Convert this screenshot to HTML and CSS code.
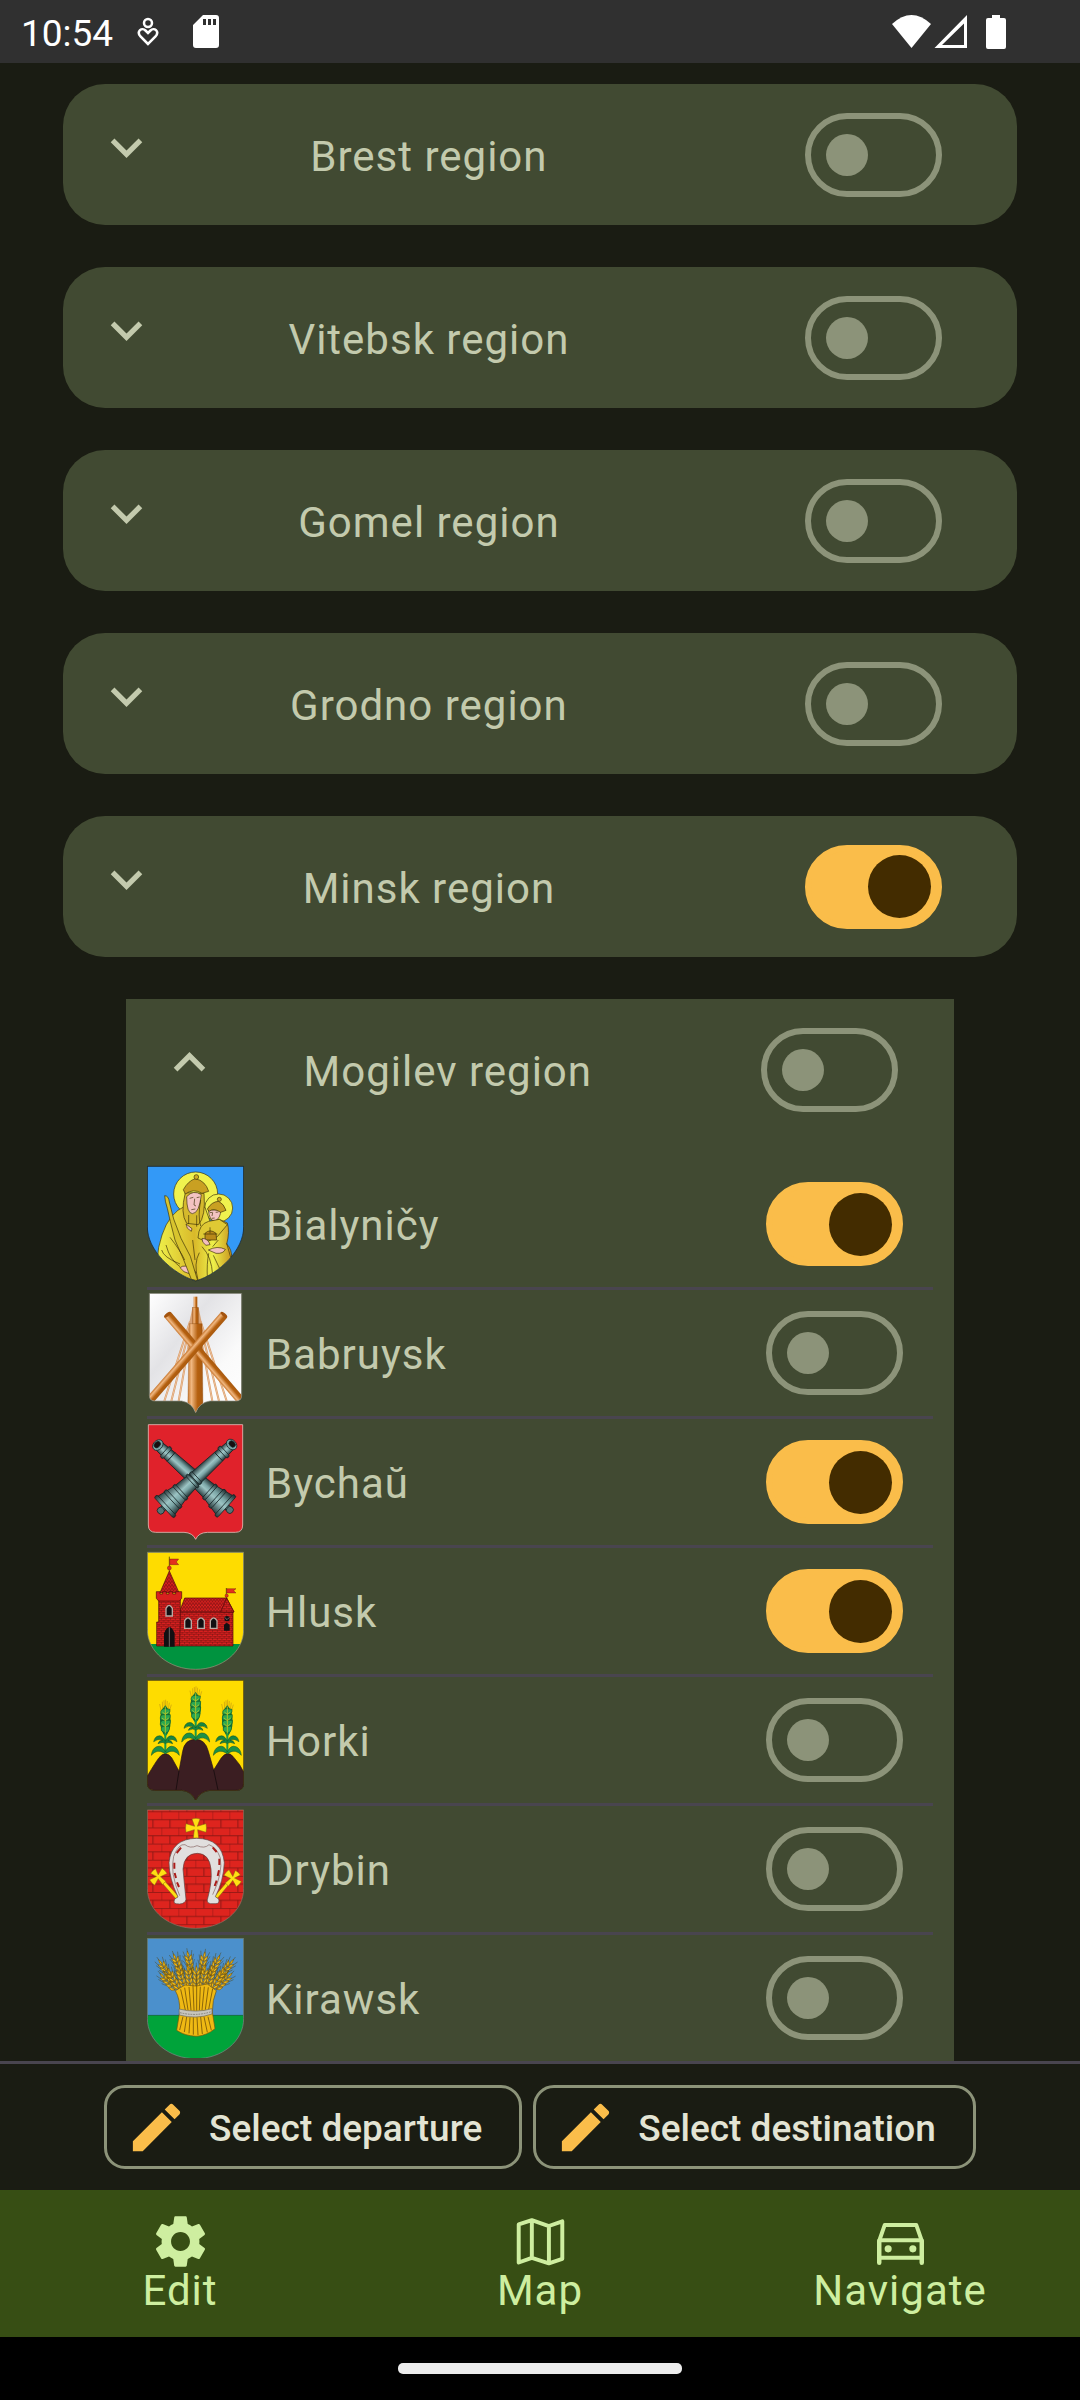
FILE: index.html
```html
<!DOCTYPE html>
<html lang="en">
<head>
<meta charset="utf-8">
<meta name="viewport" content="width=device-width, initial-scale=1">
<title>Regions</title>
<link rel="stylesheet" href="styles.css">
</head>
<body>
<svg class="defs" width="0" height="0" aria-hidden="true">
  <defs>
    <symbol id="chevron-down" viewBox="0 0 24 24"><path d="M16.59 8.59 12 13.17 7.41 8.59 6 10l6 6 6-6z"/></symbol>
    <symbol id="chevron-up" viewBox="0 0 24 24"><path d="m12 8-6 6 1.41 1.41L12 10.83l4.59 4.58L18 14z"/></symbol>
    <symbol id="pencil" viewBox="0 0 24 24"><path d="M3 17.25V21h3.75L17.81 9.94l-3.75-3.75L3 17.25zM20.71 7.04c.39-.39.39-1.02 0-1.41l-2.34-2.34c-.39-.39-1.02-.39-1.41 0l-1.83 1.83 3.75 3.75 1.83-1.83z"/></symbol>
    <linearGradient id="gold" x1="0" x2="1"><stop offset="0" stop-color="#eef04a"/><stop offset=".5" stop-color="#d9b92a"/><stop offset=".75" stop-color="#eef04a"/><stop offset="1" stop-color="#c9961f"/></linearGradient>
    <linearGradient id="silver" x1="0" y1="0" x2="1" y2="1"><stop offset="0" stop-color="#fff"/><stop offset=".35" stop-color="#e3e3e6"/><stop offset=".7" stop-color="#fafafa"/><stop offset="1" stop-color="#fff"/></linearGradient>
    <linearGradient id="wood" x1="0" x2="1"><stop offset="0" stop-color="#c87830"/><stop offset=".25" stop-color="#f0b780"/><stop offset=".65" stop-color="#b5600f"/><stop offset="1" stop-color="#a85a10"/></linearGradient>
    <linearGradient id="steel" x1="0" x2="1"><stop offset="0" stop-color="#26383a"/><stop offset=".45" stop-color="#9cc4c4"/><stop offset=".65" stop-color="#7ba5a6"/><stop offset="1" stop-color="#1c2a2c"/></linearGradient>
    <pattern id="small-brick" width="14" height="12" patternUnits="userSpaceOnUse"><rect width="14" height="12" fill="#d8201f"/><path d="M0 .7h14M0 6.7h14M3 0v6M10 6v6" stroke="#5b0c0c" stroke-width="1.4"/></pattern>
    <pattern id="tile" width="9" height="11" patternUnits="userSpaceOnUse"><rect width="9" height="11" fill="#d8201f"/><path d="M0 0 4.500 10 9 0" fill="none" stroke="#5b0c0c" stroke-width="1.600"/></pattern>
    <pattern id="big-brick" x="43" y="34" width="51" height="48.400" patternUnits="userSpaceOnUse"><rect width="51" height="49" fill="#de241e"/><path d="M0 1h51M0 25h51M0 0v25M26 25v24" stroke="#7c1512" stroke-width="2.400"/></pattern>
    <clipPath id="clip-bialynicy"><path d="M52 49H341V230C341 300 270 370 197 393C125 370 52 300 52 230Z"/></clipPath>
    <clipPath id="clip-round-a"><path d="M52 37H341V268C341 336 276 388 197 388S52 336 52 268Z"/></clipPath>
    <clipPath id="clip-round-b"><path d="M52 30H341V265C341 334 276 385 197 385S52 334 52 265Z"/></clipPath>
    <clipPath id="clip-round-c"><path d="M52 415H341V655C341 724 276 776 197 776S52 724 52 655Z"/></clipPath>
    <clipPath id="clip-babruysk"><path d="M58 40H335V346Q335 363 318 363H240Q208 368 197 398Q186 368 155 363H75Q58 363 58 346Z"/></clipPath>
    <g id="corn">
      <path d="M-13-27-17-46M-8-30-9-53M-3-30-4-57M0-30 1-59M4-30 6-55M9-30 12-50M13-27 18-44" stroke="#c79a12" stroke-width="2" fill="none"/>
      <path d="M0-42Q-17-25-16 5T0 52Q16 35 16 5T0-42Z" fill="#12763a"/>
      <g fill="#2ba84f" stroke="#0c4a25" stroke-width="1.500"><path d="M0-32Q-16-32-14-17L0-12Q16-15 14-30Z"/><path d="M0-14Q-17-16-15 0L0 6Q16 3 15-14Z"/><path d="M0 3Q-17 1-15 17L0 23Q16 20 15 3Z"/><path d="M0 21Q-15 19-12 34L0 42Q13 38 13 21Z"/></g>
      <path d="M0-38V47M-9-22 0-15 9-22M-10-4 0 4 10-4M-10 13 0 22 10 13" stroke="#e0cf1a" stroke-width="2" fill="none"/>
      <path d="M0 42V102" stroke="#1a9a46" stroke-width="6"/>
      <path d="M0 66Q-9 44-25 51Q-34 56-35 67Q-22 56-8 63Q-20 64-22 73Q-8 66 0 72Q8 66 22 73Q20 64 8 63Q22 56 35 67Q34 56 25 51Q9 44 0 66Z" fill="#168541" stroke="#0c4a25" stroke-width="1.500"/>
      <path d="M0 98Q-9 76-26 82Q-40 88-42 108Q-25 88-5 100Q0 106 5 100Q25 88 42 108Q40 88 26 82Q9 76 0 98Z" fill="#1c9147" stroke="#0c4a25" stroke-width="1.500"/>
    </g>
    <g id="ear">
      <path d="M-10 0-16-18M-9-13-13-30M0-20V-38M9-13 14-30M10 0 17-18M-9 15-17-2M9 15 17-2" stroke="#4b4418" stroke-width="1.300"/>
      <g fill="#edb91b" stroke="#6d4c06" stroke-width="1.500"><path d="M0-9Q-6-18 0-29Q6-18 0-9Z"/><path d="M0 0Q-12-4-10-17Q0-12 0 0Q0-12 10-17Q12-4 0 0Z"/><path d="M0 13Q-12 9-10-5Q0 0 0 13Q0 0 10-5Q12 9 0 13Z"/><path d="M0 26Q-12 22-10 8Q0 13 0 26Q0 13 10 8Q12 22 0 26Z"/><path d="M0 39Q-12 35-10 21Q0 26 0 39Q0 26 10 21Q12 35 0 39Z"/></g>
    </g>
    <path id="cross" d="M-4-5-12-27Q0-31 12-27L4-5 30-13Q33 0 30 13L5 5 8 30H-8L-5 5-30 13Q-33 0-30-13Z"/>
    <g id="cannon">
      <rect x="-7" y="124" width="14" height="10"/><circle cx="0" cy="140" r="9" fill="#557577"/>
      <path d="M-12-114H12L15-68-15-68Z"/><path d="M-15-68H15L18 20H-18Z"/><path d="M-18 20H18L22 70H-22Z"/><path d="M-22 70H22L33 126H-33Z"/>
      <rect x="-18" y="-91" width="36" height="10" rx="4"/><rect x="-20" y="10" width="40" height="9" rx="4"/><rect x="-22" y="22" width="44" height="8" rx="4"/><rect x="-25" y="65" width="50" height="9" rx="4"/><rect x="-30" y="91" width="60" height="10" rx="4"/><rect x="-36" y="119" width="72" height="10" rx="4"/>
      <ellipse cx="0" cy="-115" rx="15" ry="12" fill="#79a3a4"/><ellipse cx="0" cy="-117" rx="9" ry="7" fill="#160f10"/>
    </g>
  </defs>
</svg>

<div class="screen">
  <header class="status-bar">
    <time class="clock">10:54</time>
    <svg class="status-heart" width="22" height="30" viewBox="0 0 22 30" aria-hidden="true"><g fill="none" stroke="#fff" stroke-width="2.500"><circle cx="11" cy="6" r="4"/><path d="M11 27 3.500 19.500C-1 14 5 10 8.500 13.500L11 16 13.500 13.500C17 10 23 14 18.500 19.500Z"/></g></svg>
    <svg class="status-card" width="26" height="33" viewBox="0 0 26 33" aria-hidden="true"><path fill="#fff" fill-rule="evenodd" d="M10 0H23Q26 0 26 3V30Q26 33 23 33H3Q0 33 0 30V10ZM10 4V10H13V4ZM15 4V10H18V4ZM20 4V10H23V4Z"/></svg>
    <svg class="status-signals" width="115" height="34" viewBox="0 0 115 34" aria-hidden="true"><g fill="#fff"><path d="M0 9Q19.500-9 39 9L19.500 33Z"/><path fill-rule="evenodd" d="M75 0V33H42.500ZM72 8.500 50 30H72Z"/><path d="M100 0H108V3H112Q114 3 114 5V32Q114 34 112 34H96Q94 34 94 32V5Q94 3 96 3H100Z"/></g></svg>
  </header>

  <main class="regions">
    <section class="region">
      <button class="expand" type="button" aria-label="Expand Brest region"><svg class="icon"><use href="#chevron-down"/></svg></button>
      <label class="region-name" for="brest">Brest region</label>
      <input class="switch" type="checkbox" id="brest">
    </section>
    <section class="region">
      <button class="expand" type="button" aria-label="Expand Vitebsk region"><svg class="icon"><use href="#chevron-down"/></svg></button>
      <label class="region-name" for="vitebsk">Vitebsk region</label>
      <input class="switch" type="checkbox" id="vitebsk">
    </section>
    <section class="region">
      <button class="expand" type="button" aria-label="Expand Gomel region"><svg class="icon"><use href="#chevron-down"/></svg></button>
      <label class="region-name" for="gomel">Gomel region</label>
      <input class="switch" type="checkbox" id="gomel">
    </section>
    <section class="region">
      <button class="expand" type="button" aria-label="Expand Grodno region"><svg class="icon"><use href="#chevron-down"/></svg></button>
      <label class="region-name" for="grodno">Grodno region</label>
      <input class="switch" type="checkbox" id="grodno">
    </section>
    <section class="region">
      <button class="expand" type="button" aria-label="Expand Minsk region"><svg class="icon"><use href="#chevron-down"/></svg></button>
      <label class="region-name" for="minsk">Minsk region</label>
      <input class="switch" type="checkbox" id="minsk" checked>
    </section>

    <section class="open-region">
      <div class="region region-head">
        <button class="expand" type="button" aria-label="Collapse Mogilev region"><svg class="icon"><use href="#chevron-up"/></svg></button>
        <label class="region-name" for="mogilev">Mogilev region</label>
        <input class="switch" type="checkbox" id="mogilev">
      </div>
      <ul class="districts">
        <li class="district">
          <svg class="arms" viewBox="51 42 291 360" aria-hidden="true">
            <g clip-path="url(#clip-bialynicy)" stroke="#3d3108" stroke-width="2">
              <path d="M52 49H341V393H52Z" fill="#3399f7" stroke="none"/>
              <circle cx="197" cy="132" r="66" fill="#f0f24e"/><circle cx="266" cy="174" r="42" fill="#f0f24e"/>
              <path d="M166 168Q118 188 96 255Q83 292 82 330L140 380 197 394 250 378 305 330Q307 298 290 282Q300 245 292 219L268 208 240 214 225 172Z" fill="url(#gold)"/>
              <path d="M166 128Q150 190 170 220L205 224Q228 200 222 130Z" fill="#d5b92c"/>
              <path d="M170 140Q170 190 187 191Q208 190 214 134Q190 118 170 140Z" fill="#f3c3c2"/>
              <path d="M160 119Q175 92 196 86Q226 92 236 124L216 130Q190 114 166 132Z" fill="#c9a022"/><circle cx="199" cy="81" r="7" fill="#d0ad24"/>
              <path d="M179 145 190 142M200 143 209 141M194 146 192 165 198 168M184 179 196 177" fill="none"/>
              <path d="M235 180Q238 213 255 213Q272 205 272 180Z" fill="#f3c3c2"/>
              <path d="M232 177Q245 155 266 154Q282 162 288 181L272 187Q250 172 238 184Z" fill="#c9a022"/><circle cx="268" cy="148" r="6" fill="#d0ad24"/>
              <path d="M239 188 248 187M257 187 265 186M248 188 246 198M245 205 254 204" fill="none"/>
              <path d="M236 214Q206 222 204 264L230 276 262 260 292 224 268 208Z" fill="#dfc934"/>
              <path d="M258 250Q240 235 225 250V270H260Z" fill="#b98919"/><path d="M240 232V250M220 252H262" fill="none"/>
              <path d="M216 265Q235 266 240 284L228 286Q215 278 216 265ZM235 300Q262 286 286 298Q280 312 258 310ZM150 353Q164 341 190 358L198 368 178 371Q160 368 150 353ZM168 222 186 236 184 244Q168 236 168 222Z" fill="#f3bfbf"/>
              <path d="M104 137Q116 137 118 156L131 207 153 265 181 319 203 392 184 388 160 327 135 270 121 215 112 175Q105 155 104 137Z" fill="#d8c42e"/>
              <path d="M108 285Q120 330 150 350M120 262Q150 300 164 330M95 300Q100 322 150 342M208 308Q190 340 204 390M216 290Q245 320 248 376M236 310Q230 340 232 384M250 316 272 362M188 270 195 330M176 195V222M200 196V230M212 150Q203 200 212 228M290 280 302 322M265 270 248 290" fill="none"/>
            </g>
            <path d="M52 49H341V230C341 300 270 370 197 393C125 370 52 300 52 230Z" fill="none" stroke="#14202c" stroke-width="2"/>
          </svg>
          <label class="district-name" for="bialynicy">Bialyničy</label>
          <input class="switch" type="checkbox" id="bialynicy" checked>
        </li>
        <li class="district">
          <svg class="arms" viewBox="51 39 291 360" aria-hidden="true">
            <g clip-path="url(#clip-babruysk)">
              <path d="M58 40H335V399H58Z" fill="url(#silver)"/>
              <path d="M180 125 103 363M183 130 124 363M186 140 146 363M212 125 290 363M209 130 267 363M206 140 247 363" stroke="#d99862" stroke-width="6"/><path d="M180 125 103 363M183 130 124 363M186 140 146 363M212 125 290 363M209 130 267 363M206 140 247 363" stroke="#f5d5b8" stroke-width="2"/>
              <path d="M187 84 177 132H216L206 84Z" fill="#d9a274"/>
              <rect x="191" y="50" width="11" height="34" fill="url(#wood)"/><rect x="188" y="82" width="17" height="50" fill="url(#wood)" stroke="#8d4a0c"/><path d="M178 131H216L219 399H173Z" fill="url(#wood)" stroke="#8d4a0c"/>
              <g transform="translate(112 104) rotate(-40.500)"><rect x="-12" width="25" height="345" fill="url(#wood)"/><ellipse cx="0" cy="0" rx="12" ry="5" fill="#a4540f"/></g>
              <g transform="translate(282 104) rotate(41)"><rect x="-12" width="25" height="345" fill="url(#wood)"/><ellipse cx="0" cy="0" rx="12" ry="5" fill="#a4540f"/></g>
            </g>
            <path d="M58 40H335V346Q335 363 318 363H240Q208 368 197 398Q186 368 155 363H75Q58 363 58 346Z" fill="none" stroke="#8d8d80" stroke-width="2"/>
          </svg>
          <label class="district-name" for="babruysk">Babruysk</label>
          <input class="switch" type="checkbox" id="babruysk">
        </li>
        <li class="district">
          <svg class="arms" viewBox="51 36 291 360" aria-hidden="true">
            <path d="M55 44H338V345Q338 367 316 367H232Q205 368 197 388Q188 368 162 367H77Q55 367 55 345Z" fill="#e0222b" stroke="#e5b9b4" stroke-width="2.500"/>
            <g fill="url(#steel)" stroke="#162426" stroke-width="2"><use href="#cannon" transform="translate(181 193) rotate(-48) scale(1.18 1.14)"/><use href="#cannon" transform="translate(209 193) rotate(47) scale(1.18 1.14)"/></g>
          </svg>
          <label class="district-name" for="bychau">Bychaŭ</label>
          <input class="switch" type="checkbox" id="bychau" checked>
        </li>
        <li class="district">
          <svg class="arms" viewBox="51 33 291 360" aria-hidden="true">
            <g clip-path="url(#clip-round-a)"><path d="M52 37H341V313H52Z" fill="#fedc00"/><path d="M52 312H341V390H52Z" fill="#00933f"/></g>
            <g stroke="#4b0909" stroke-width="2">
              <path d="M148 214H309V318H148Z" fill="url(#small-brick)"/><path d="M164 174H290L312 216H148Z" fill="url(#tile)"/><path d="M290 174 272 216H312Z" fill="url(#small-brick)"/>
              <path d="M80 246H86V178H151V246L148 318H80Z" fill="url(#small-brick)"/><path d="M118 93 90 158H147Z" fill="url(#tile)"/><path d="M79 155H90V162H98V155H109V162H117V155H128V162H137V155H155V175L148 183H86L79 175Z" fill="#d8201f"/>
              <path d="M118 93V50M289 174V144" stroke="#282010"/><path d="M119 57H146L139 66 146 74H119ZM290 146H318L311 152 318 159H290Z" fill="#e3301d" stroke-width="1"/><circle cx="118" cy="84" r="6" fill="#e3301d" stroke-width="1"/><circle cx="290" cy="167" r="5" fill="#e3301d" stroke-width="1"/>
            </g>
            <g fill="#120f12" stroke="#b9aaa3" stroke-width="4"><path d="M108 228V205Q117 187 127 205V228ZM164 265V242Q174 225 184 242V265ZM203 265V242Q213 225 223 242V265ZM241 265V242Q251 225 261 242V265Z"/></g>
            <path d="M102 320V280Q118 242 134 280V320ZM282 272V255Q290 243 299 255V272Z" fill="#120f12"/><circle cx="291" cy="236" r="8" fill="#120f12"/><path d="M284 232 291 239 298 232M118 262V320" stroke="#a09692" stroke-width="2" fill="none"/>
            <path d="M52 37H341V268C341 336 276 388 197 388S52 336 52 268Z" fill="none" stroke="#999b80" stroke-width="2"/>
          </svg>
          <label class="district-name" for="hlusk">Hlusk</label>
          <input class="switch" type="checkbox" id="hlusk" checked>
        </li>
        <li class="district">
          <svg class="arms" viewBox="51 30 291 360" aria-hidden="true">
            <path d="M52 31H341V340Q341 361 320 361H240Q210 364 197 391Q184 364 155 361H75Q52 361 52 340Z" fill="#fedc00"/>
            <path d="M52 318Q77 276 87 263Q106 239 125 263L147 303 158 244Q164 208 197 208Q226 208 235 244L251 300 273 265Q293 237 312 263Q330 282 341 306V340Q341 361 320 361H240Q210 364 197 391Q184 364 155 361H75Q52 361 52 340Z" fill="#3b1e22" stroke="#251316" stroke-width="2"/>
            <path d="M147 303 138 360M251 300 264 360" stroke="#170c0e" stroke-width="2.500"/>
            <use href="#corn" x="106" y="148"/><use href="#corn" x="197" y="108"/><use href="#corn" x="292" y="148"/>
            <path d="M52 31H341V340Q341 361 320 361H240Q210 364 197 391Q184 364 155 361H75Q52 361 52 340Z" fill="none" stroke="#392e12" stroke-width="2"/>
          </svg>
          <label class="district-name" for="horki">Horki</label>
          <input class="switch" type="checkbox" id="horki">
        </li>
        <li class="district">
          <svg class="arms" viewBox="51 27 291 360" aria-hidden="true">
            <path d="M52 30H341V385H52Z" fill="url(#big-brick)" clip-path="url(#clip-round-b)"/>
            <path d="M52 30H341V265C341 334 276 385 197 385S52 334 52 265Z" fill="none" stroke="#9a7064" stroke-width="2"/>
            <g stroke="#806414" stroke-width="1.500" fill="#ffdf13"><path d="M84 235 91 229 148 292 140 299ZM309 239 302 233 250 293 258 300Z"/><use href="#cross" transform="translate(198 84)"/><use href="#cross" transform="translate(85 230) rotate(-43) scale(.85)"/><use href="#cross" transform="translate(308 235) rotate(43) scale(.85)"/></g>
            <path d="M133 309Q129 297 144 291Q117 235 117 188Q124 116 200 115Q276 116 283 188Q280 245 256 290L266 297Q270 310 258 311H242Q230 309 232 299Q247 245 243 207Q238 161 202 160Q162 161 159 207Q163 252 168 298Q166 311 149 312Q137 312 133 309Z" fill="#e1dfde" stroke="#5e4341" stroke-width="2"/>
            <path d="M149 287Q119 218 131 169Q146 130 165 134Q180 147 201 137Q224 147 237 134Q260 142 271 174Q279 219 248 284" fill="none" stroke="#83605d" stroke-width="2"/><path d="M140 159 153 143M133 188V206M134 219 138 234M141 247 147 261M248 142 260 156M268 176V195M267 211 263 228M260 242 254 258" stroke="#aa1c19" stroke-width="6"/>
          </svg>
          <label class="district-name" for="drybin">Drybin</label>
          <input class="switch" type="checkbox" id="drybin">
        </li>
        <li class="district">
          <svg class="arms" viewBox="51 414 291 360" aria-hidden="true">
            <g clip-path="url(#clip-round-c)"><path d="M52 415H341V647H52Z" fill="#4b90cc"/><path d="M52 646H341V778H52Z" fill="#00a33a"/><path d="M52 646H341" stroke="#174633" stroke-width="1.500"/></g>
            <use href="#ear" transform="translate(102 503) rotate(-34)"/><use href="#ear" transform="translate(141 488) rotate(-22)"/><use href="#ear" transform="translate(177 482) rotate(-10)"/><use href="#ear" transform="translate(220 484) rotate(10)"/><use href="#ear" transform="translate(257 492) rotate(25)"/><use href="#ear" transform="translate(293 501) rotate(38)"/>
            <use href="#ear" transform="translate(109 541) rotate(-42)"/><use href="#ear" transform="translate(286 540) rotate(44)"/><use href="#ear" transform="translate(127 533) rotate(-30)"/><use href="#ear" transform="translate(268 532) rotate(32)"/><use href="#ear" transform="translate(152 527) rotate(-16)"/><use href="#ear" transform="translate(243 526) rotate(18)"/><use href="#ear" transform="translate(176 525) rotate(-7)"/><use href="#ear" transform="translate(222 525) rotate(8)"/><use href="#ear" transform="translate(199 526)"/>
            <path d="M136 572 165 555 199 558 232 552 259 572Q247 600 247 636L255 686Q230 707 198 709Q163 707 140 691L149 636Q151 598 136 572Z" fill="#efb913" stroke="#765407" stroke-width="2"/>
            <path d="M152 568 166 630M164 563 174 630M177 561 183 631M189 558 192 632M200 520V632M211 560 208 631M223 560 216 630M235 562 226 629M248 566 236 628M159 650 149 690M170 651 163 696M180 652 177 700M190 652V704M201 652 204 705M212 651 217 702M222 650 232 697M234 650 244 691" stroke="#765407" stroke-width="2.500" fill="none"/>
            <path d="M147 627Q199 640 246 626V642Q198 659 148 645Z" fill="#c7c5bd" stroke="#68655c" stroke-width="2"/><path d="M150 638Q198 650 244 635" fill="none" stroke="#858278" stroke-width="3" stroke-dasharray="5 3"/>
            <path d="M52 415H341V655C341 724 276 776 197 776S52 724 52 655Z" fill="none" stroke="#788e89" stroke-width="2"/>
          </svg>
          <label class="district-name" for="kirawsk">Kirawsk</label>
          <input class="switch" type="checkbox" id="kirawsk">
        </li>
      </ul>
    </section>
  </main>

  <div class="route-bar">
    <button class="route-button" type="button"><svg class="icon pencil"><use href="#pencil"/></svg><span>Select departure</span></button>
    <button class="route-button" type="button"><svg class="icon pencil"><use href="#pencil"/></svg><span>Select destination</span></button>
  </div>

  <nav class="tabs">
    <a class="tab" href="#edit"><svg class="icon" viewBox="0 0 24 24"><path d="M19.140 12.940c.04-.3.06-.61.06-.94 0-.32-.02-.64-.07-.94l2.030-1.580c.18-.14.23-.41.12-.61l-1.920-3.320c-.12-.22-.37-.29-.59-.22l-2.390.96c-.5-.38-1.030-.7-1.620-.94l-.36-2.540c-.04-.24-.24-.41-.48-.41h-3.840c-.24 0-.43.17-.47.41l-.36 2.540c-.59.24-1.130.57-1.620.94l-2.390-.96c-.22-.08-.47 0-.59.22L2.740 8.870c-.12.21-.08.47.12.61l2.030 1.580c-.05.3-.09.63-.09.94s.02.64.07.94l-2.030 1.580c-.18.14-.23.41-.12.61l1.920 3.320c.12.22.37.29.59.22l2.390-.96c.5.38 1.030.7 1.620.94l.36 2.540c.05.24.24.41.48.41h3.840c.24 0 .44-.17.47-.41l.36-2.540c.59-.24 1.130-.56 1.620-.94l2.390.96c.22.08.47 0 .59-.22l1.920-3.320c.12-.22.07-.47-.12-.61l-2.010-1.580zM12 15.600c-1.980 0-3.600-1.620-3.600-3.600s1.620-3.600 3.600-3.600 3.600 1.620 3.600 3.600-1.620 3.600-3.600 3.600z"/></svg><span>Edit</span></a>
    <a class="tab" href="#map"><svg class="icon" viewBox="0 0 24 24"><path fill="none" stroke="currentColor" stroke-width="1.500" stroke-linejoin="round" d="M3.700 5.500 8.700 3.900 15.200 6.100 20.300 4.300V18.600L15.200 20.300 8.700 18.200 3.700 20ZM8.700 3.900V18.200M15.200 6.100V20.300"/></svg><span>Map</span></a>
    <a class="tab" href="#navigate"><svg class="icon" viewBox="0 0 24 24"><g fill="none" stroke="currentColor" stroke-width="1.500"><path stroke-linejoin="round" d="M3.800 12 6 5.700H18L20.200 12"/><path d="M3.800 11.500H20.200M3.800 18.200H20.200"/><path stroke-linecap="round" stroke-width="1.700" d="M3.900 11.800V20.100M20.100 11.800V20.100"/></g><circle cx="7.300" cy="14.800" r="1.350"/><circle cx="16.700" cy="14.800" r="1.350"/></svg><span>Navigate</span></a>
  </nav>
  <div class="system-bar"><span class="home-pill"></span></div>
</div>
</body>
</html>
```
FILE: styles.css
```css
* {
  box-sizing: border-box;
}

body {
  margin: 0;
  background: #1a1c13;
  color: #c3caad;
  font-family: Roboto, sans-serif;
  font-size: 42px;
  line-height: 63px;
}

button {
  border: 0;
  background: none;
  color: inherit;
  font: inherit;
}

.defs {
  display: block;
}

.icon {
  display: block;
  width: 63px;
  height: 63px;
  fill: currentColor;
}

.screen {
  display: flex;
  flex-direction: column;
  min-height: 100vh;
}

.status-bar {
  display: flex;
  align-items: center;
  height: 63px;
  padding: 0 73px 0 21px;
  background: #303030;
  color: #fff;
}

.clock {
  padding-top: 3px;
  font-size: 37px;
}

.status-heart {
  margin-left: 24px;
}

.status-card {
  margin-left: 34px;
}

.status-signals {
  margin-left: auto;
}

.regions {
  display: flex;
  flex: 1;
  flex-direction: column;
  gap: 42px;
  padding: 21px 63px 0;
}

.region {
  display: grid;
  grid-template-columns: 126px 1fr 30%;
  align-items: center;
  min-height: 141px;
  border-radius: 42px;
  background: #414a32;
}

.expand {
  display: flex;
  align-items: center;
  align-self: start;
  justify-content: center;
  height: 126px;
  padding: 0;
}

.region-name {
  padding: 3px 62px 0 0;
  text-align: center;
  letter-spacing: 1px;
}

.region .switch {
  justify-self: center;
}

.switch {
  display: flex;
  flex: none;
  align-items: center;
  width: 137px;
  height: 84px;
  margin: 0;
  padding: 0 15px;
  border: 6px solid #8c9379;
  border-radius: 42px;
  appearance: none;
}

.switch::before {
  width: 42px;
  height: 42px;
  border-radius: 50%;
  background: #8c9379;
  content: "";
}

.switch:checked {
  justify-content: flex-end;
  padding: 0 5px;
  border-color: #fabd4a;
  background: #fabd4a;
}

.switch:checked::before {
  width: 63px;
  height: 63px;
  background: #432c00;
}

.open-region {
  flex: 1;
  margin: 0 63px;
  background: #414a32;
}

.region-head {
  border-radius: 0;
}

.districts {
  margin: 0;
  padding: 21px 21px 0;
  list-style: none;
}

.district {
  display: flex;
  align-items: center;
  height: 129px;
  padding-right: 30px;
  border-bottom: 3px solid #49454f;
}

.district:last-child {
  height: 126px;
  border-bottom: 0;
}

.arms {
  flex: none;
  width: 97px;
  height: 120px;
}

.district-name {
  flex: 1;
  padding: 3px 0 0 22px;
  letter-spacing: 1px;
}

.route-bar {
  display: flex;
  justify-content: center;
  gap: 11px;
  padding: 21px 0;
  border-top: 3px solid #49454f;
}

.route-button {
  display: flex;
  align-items: center;
  gap: 21px;
  height: 84px;
  padding: 0 37px 0 18px;
  border: 3px solid #8c9379;
  border-radius: 21px;
  color: #e3e4d4;
  font-size: 37px;
  font-weight: 500;
}

.route-button span {
  padding-top: 3px;
}

.pencil {
  color: #fabd4a;
}

.tabs {
  display: grid;
  grid-template-columns: repeat(3, 1fr);
  padding: 20px 0 28px;
  background: #374e14;
}

.tab {
  display: flex;
  flex-direction: column;
  align-items: center;
  color: #ceeea0;
  line-height: 36px;
  letter-spacing: 1px;
  text-decoration: none;
}

.system-bar {
  display: flex;
  align-items: center;
  justify-content: center;
  height: 63px;
  background: #000;
}

.home-pill {
  width: 284px;
  height: 11px;
  border-radius: 5px;
  background: #ececec;
}
```
